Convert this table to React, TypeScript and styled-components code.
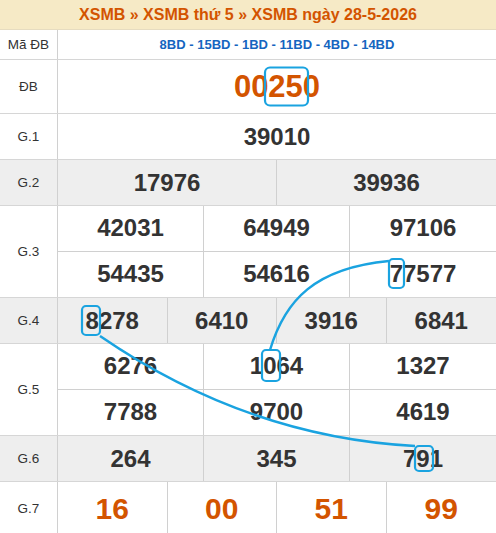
import React from "react";
import styled, { createGlobalStyle } from "styled-components";

const Global = createGlobalStyle`
  html, body { margin: 0; padding: 0; background: #fff; }
  body { font-family: "Liberation Sans", Arial, sans-serif; color: #333; }
`;

const Page = styled.div`
  position: relative;
  width: 496px;
`;

const Header = styled.div`
  height: 29px;
  border-bottom: 1px solid #e6dcc0;
  background: #f6eac6;
  display: flex;
  align-items: center;
  justify-content: center;
  font-size: 16px;
  font-weight: bold;
  color: #d35400;
`;

const Row = styled.div<{ $h: number; $grey?: boolean }>`
  display: grid;
  grid-template-columns: 58px 1fr;
  border-bottom: 1px solid #d6d6d6;
  background: ${(p) => (p.$grey ? "#eeeeee" : "#ffffff")};
  min-height: ${(p) => p.$h}px;
`;

const Label = styled.div`
  border-right: 1px solid #d0d0d0;
  display: flex;
  align-items: center;
  justify-content: center;
  font-size: 13.5px;
  color: #333;
`;

const Cells = styled.div<{ $cols: number }>`
  display: grid;
  grid-template-columns: repeat(${(p) => p.$cols}, 1fr);
  grid-auto-rows: 1fr;
`;

const Cell = styled.div<{ $size?: number; $accent?: boolean; $last?: boolean; $bottom?: boolean }>`
  display: flex;
  align-items: center;
  justify-content: center;
  font-weight: bold;
  font-size: ${(p) => p.$size ?? 24}px;
  color: ${(p) => (p.$accent ? "#d35400" : "#333")};
  border-right: ${(p) => (p.$last ? "none" : "1px solid #d0d0d0")};
  border-bottom: ${(p) => (p.$bottom ? "1px solid #d0d0d0" : "none")};
`;

const Codes = styled.div`
  display: flex;
  align-items: center;
  justify-content: center;
  font-size: 13px;
  font-weight: bold;
  color: #1565c0;
`;

const Overlay = styled.svg`
  position: absolute;
  left: 0;
  top: 0;
  width: 496px;
  height: 533px;
  pointer-events: none;
`;

type Prize = {
  label: string;
  cols: number;
  values: string[];
  h: number;
  grey?: boolean;
  size?: number;
  accent?: boolean;
};

const prizes: Prize[] = [
  { label: "ĐB", cols: 1, values: ["00250"], h: 53, size: 31, accent: true },
  { label: "G.1", cols: 1, values: ["39010"], h: 45 },
  { label: "G.2", cols: 2, values: ["17976", "39936"], h: 45, grey: true },
  { label: "G.3", cols: 3, values: ["42031", "64949", "97106", "54435", "54616", "77577"], h: 91 },
  { label: "G.4", cols: 4, values: ["8278", "6410", "3916", "6841"], h: 45, grey: true },
  { label: "G.5", cols: 3, values: ["6276", "1064", "1327", "7788", "9700", "4619"], h: 91 },
  { label: "G.6", cols: 3, values: ["264", "345", "791"], h: 45, grey: true },
  { label: "G.7", cols: 4, values: ["16", "00", "51", "99"], h: 53, size: 30, accent: true },
];

const BLUE = "#1aa3e0";

export default function App() {
  return (
    <>
      <Global />
      <Page>
        <Header>XSMB » XSMB thứ 5 » XSMB ngày 28-5-2026</Header>
        <Row $h={29}>
          <Label>Mã ĐB</Label>
          <Codes>8BD - 15BD - 1BD - 11BD - 4BD - 14BD</Codes>
        </Row>
        {prizes.map((p) => {
          const rows = Math.ceil(p.values.length / p.cols);
          return (
            <Row key={p.label} $h={p.h} $grey={p.grey}>
              <Label>{p.label}</Label>
              <Cells $cols={p.cols}>
                {p.values.map((v, i) => (
                  <Cell
                    key={i}
                    $size={p.size}
                    $accent={p.accent}
                    $last={i % p.cols === p.cols - 1}
                    $bottom={Math.floor(i / p.cols) < rows - 1}
                  >
                    {v}
                  </Cell>
                ))}
              </Cells>
            </Row>
          );
        })}
        <Overlay viewBox="0 0 496 533">
          <g fill="none" stroke={BLUE} strokeWidth={2.2}>
            <rect x={265} y={67.5} width={43} height={38} rx={5} />
            <rect x={389} y={259} width={15} height={29} rx={4} />
            <rect x={82} y={306} width={18} height={29} rx={4} />
            <rect x={262} y={350} width={18} height={31} rx={4} />
            <rect x={415} y={446} width={18} height={25} rx={4} />
          </g>
          <g fill="none" stroke={BLUE} strokeWidth={2.5}>
            <path d="M270,350 C285,300 315,268 389,261" />
            <path d="M100,336 Q247,437 415,446" />
          </g>
        </Overlay>
      </Page>
    </>
  );
}
